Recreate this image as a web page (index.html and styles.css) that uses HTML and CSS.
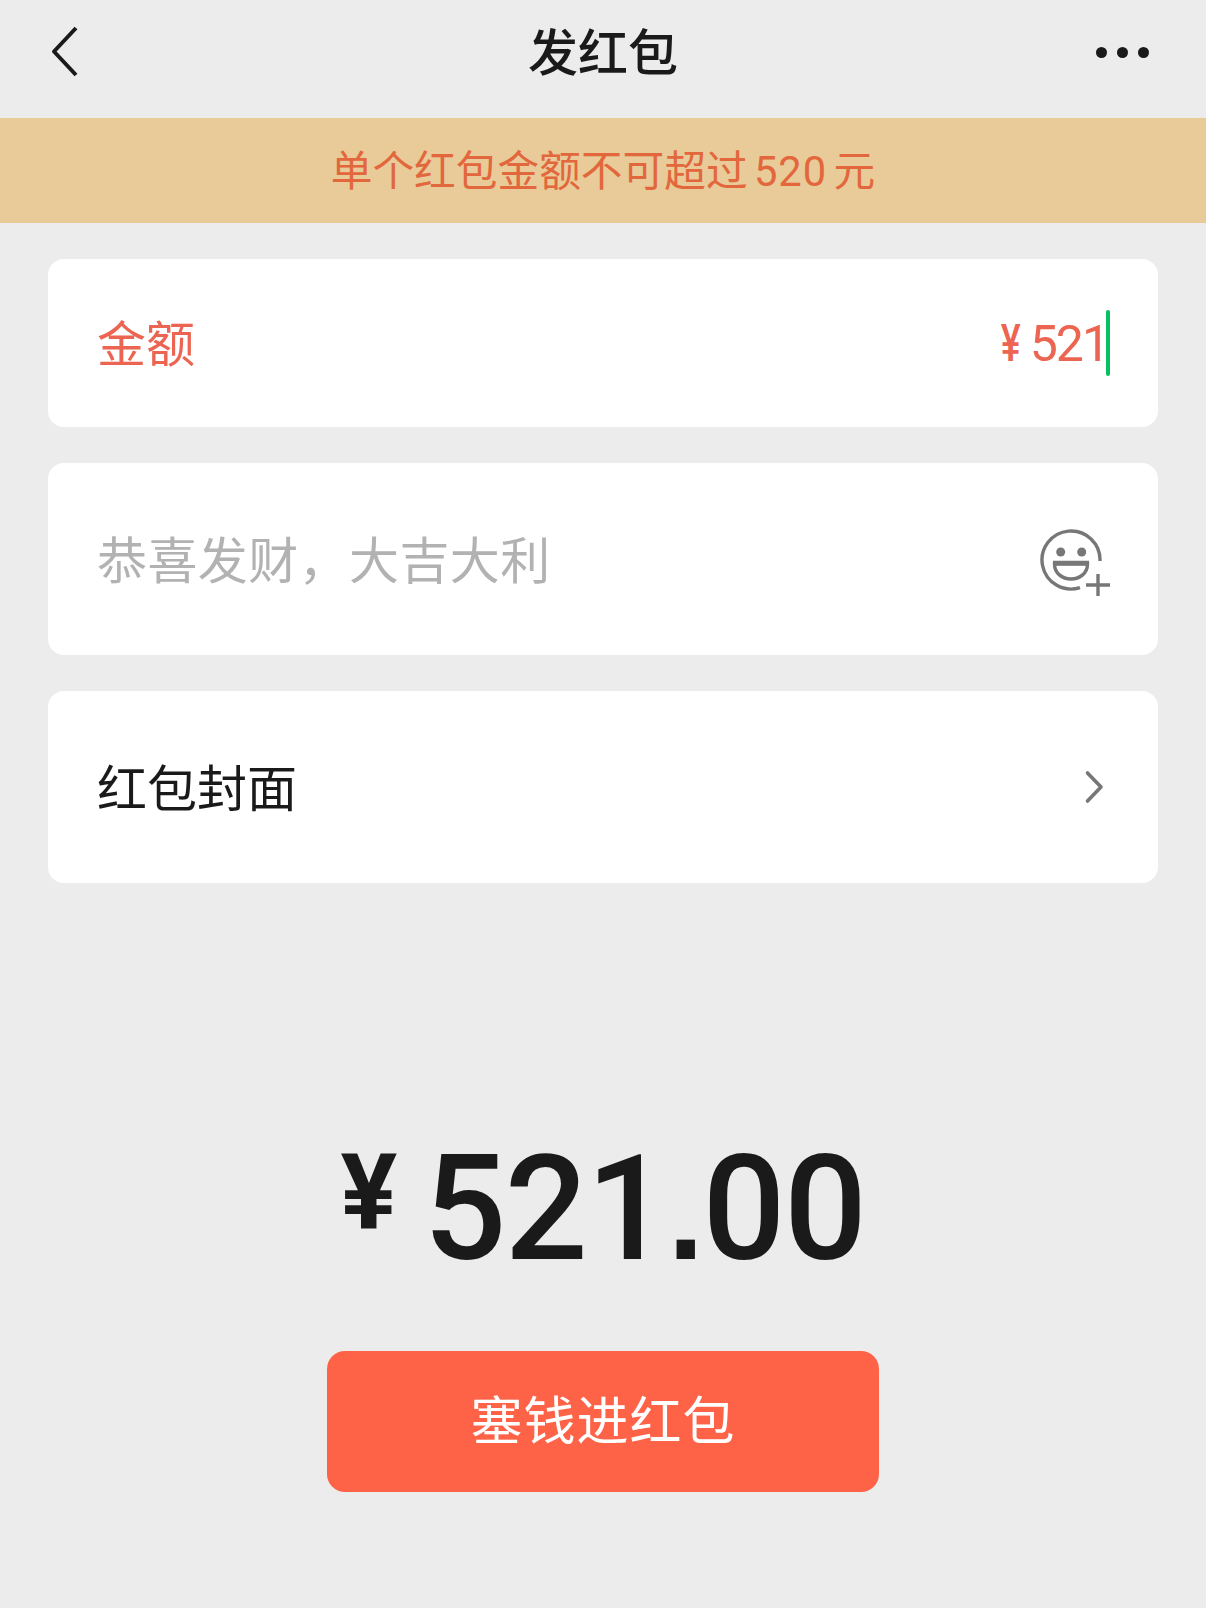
FILE: index.html
```html
<!DOCTYPE html>
<html lang="zh-CN">
<head>
    <meta charset="UTF-8">
    <title>发红包</title>
    <link rel="stylesheet" href="styles.css">
</head>
<body>
<div class="header">
    <svg class="back" width="32" height="54" viewBox="0 0 32 54">
        <path d="M28 3 L6 26.5 L28 50" fill="none" stroke="#1a1a1a" stroke-width="4" stroke-linejoin="round"/>
    </svg>
    <div class="title">发红包</div>
    <div class="more"><span></span><span></span><span></span></div>
</div>
<div class="notice">单个红包金额不可超过 <span class="notice-num">520</span> 元</div>
<div class="form">
    <div class="card card-amount">
        <div class="label">金额</div>
        <div class="input"><span class="input-sign">¥</span><span class="input-num">521</span><span class="caret"></span></div>
    </div>
    <div class="card">
        <div class="hint">恭喜发财，大吉大利</div>
        <svg class="emoji" width="72" height="72" viewBox="0 0 72 72">
            <path d="M60 36 A29 29 0 1 0 40 62.6" fill="none" stroke="#777" stroke-width="3.4"/>
            <circle cx="20.7" cy="27" r="4.5" fill="#777"/>
            <circle cx="41.7" cy="27" r="4.5" fill="#777"/>
            <path d="M14.5 39 H47.5 C47.5 48 40 54 31 54 C22 54 14.5 48 14.5 39 Z" fill="none" stroke="#777" stroke-width="3.4"/>
            <path d="M13 38 H49" fill="none" stroke="#777" stroke-width="4.4"/>
            <path d="M46 60 H70 M58 49 V71" fill="none" stroke="#777" stroke-width="3.4"/>
        </svg>
    </div>
    <div class="card">
        <div class="text">红包封面</div>
        <svg class="arrow" width="22" height="34" viewBox="0 0 22 34">
            <path d="M3.5 3 L17 17 L3.5 31" fill="none" stroke="#777" stroke-width="3.6" stroke-linecap="round" stroke-linejoin="round"/>
        </svg>
    </div>
</div>
<div class="total"><span class="total-sign">¥</span><span class="total-num">521<span class="total-dot">.</span>00</span></div>
<div class="btn">塞钱进红包</div>
</body>
</html>
```

FILE: styles.css
```css
* {
    padding: 0;
    margin: 0;
    box-sizing: border-box;
}

body {
    background: #ececec;
    font-family: Roboto, "Noto Sans CJK SC", sans-serif;
    color: #1a1a1a;
}

.header {
    height: 118px;
    padding: 0 48px 14px;
    display: grid;
    grid-template-columns: 1fr auto 1fr;
    align-items: center;
}

.title {
    font-size: 50px;
    font-weight: 500;
    line-height: 80px;
    margin-top: 4px;
}

.more {
    width: 53px;
    margin-right: 9px;
    justify-self: end;
    display: flex;
    justify-content: space-between;
}

.more span {
    width: 11px;
    height: 11px;
    border-radius: 50%;
    background: #1a1a1a;
}

.notice {
    height: 105px;
    padding-top: 2px;
    background: #e8cb98;
    color: #e2673c;
    font-size: 41.7px;
    line-height: 103px;
    text-align: center;
    word-spacing: -4px;
}

.notice-num {
    letter-spacing: 1px;
}

.form {
    padding: 36px 48px 0;
    display: flex;
    flex-direction: column;
    gap: 36px;
}

.card {
    height: 192px;
    padding: 0 46px 0 49px;
    background: #fff;
    border-radius: 16px;
    display: flex;
    align-items: center;
    justify-content: space-between;
}

.card-amount {
    height: 168px;
    padding-right: 48px;
}

.label {
    font-size: 49px;
    color: #ec6553;
    margin-bottom: 5px;
}

.input {
    display: flex;
    align-items: center;
}

.input-sign {
    font-size: 52px;
    font-weight: 500;
    color: #ec6553;
    margin-right: 5px;
    transform: scaleX(0.72);
}

.input-num {
    font-size: 50px;
    letter-spacing: -2px;
    color: #ec6553;
    margin-top: 2px;
}

.caret {
    width: 4px;
    height: 66px;
    margin-left: -2px;
    border-radius: 2px;
    background: #07c160;
}

.hint {
    font-size: 50px;
    letter-spacing: 0.4px;
    color: #b2b2b2;
    margin-bottom: 5px;
}

.text {
    font-size: 50px;
    margin-bottom: 5px;
}

.emoji {
    margin-top: 4px;
}

.arrow {
    margin-right: 6px;
}

.total {
    margin-top: 227px;
    height: 241px;
    display: flex;
    justify-content: center;
    align-items: flex-start;
    font-weight: 500;
}

.total-sign {
    font-size: 106px;
    font-weight: 700;
    line-height: 150px;
    margin-top: 8px;
    margin-right: 26px;
}

.total-num {
    font-size: 146px;
    line-height: 200px;
    letter-spacing: -1.5px;
}

.total-dot {
    font-family: "Liberation Sans", sans-serif;
    font-weight: 700;
    font-size: 130px;
}

.btn {
    width: 552px;
    height: 141px;
    margin: 0 auto;
    padding-top: 2px;
    background: #ff6347;
    border-radius: 18px;
    color: #fff;
    font-size: 52px;
    line-height: 139px;
    text-align: center;
    letter-spacing: 1px;
}
```
